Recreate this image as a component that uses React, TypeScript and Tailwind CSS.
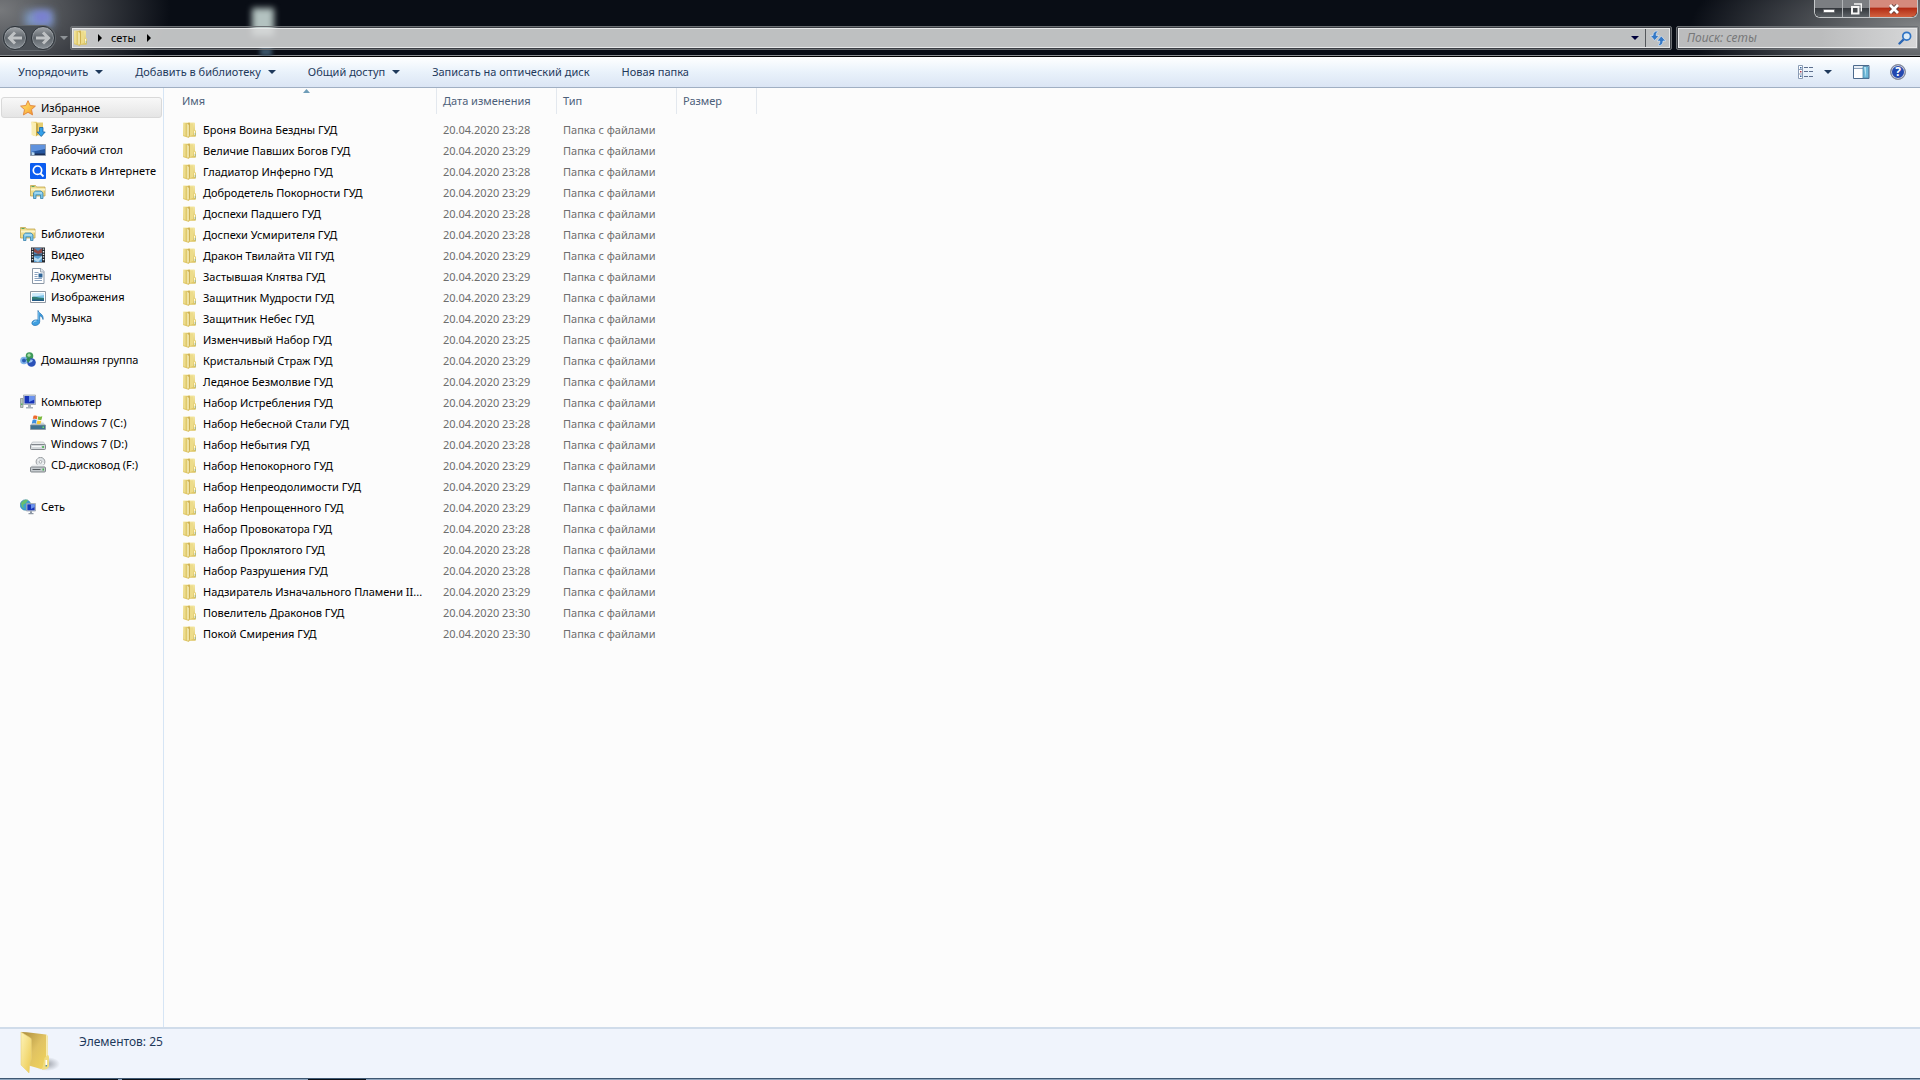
import React from 'react';

const files = [
  ['Броня Воина Бездны ГУД', '23:28'],
  ['Величие Павших Богов ГУД', '23:29'],
  ['Гладиатор Инферно ГУД', '23:28'],
  ['Добродетель Покорности ГУД', '23:29'],
  ['Доспехи Падшего ГУД', '23:28'],
  ['Доспехи Усмирителя ГУД', '23:28'],
  ['Дракон Твилайта VII ГУД', '23:29'],
  ['Застывшая Клятва ГУД', '23:29'],
  ['Защитник Мудрости ГУД', '23:29'],
  ['Защитник Небес ГУД', '23:29'],
  ['Изменчивый Набор ГУД', '23:25'],
  ['Кристальный Страж ГУД', '23:29'],
  ['Ледяное Безмолвие ГУД', '23:29'],
  ['Набор Истребления ГУД', '23:29'],
  ['Набор Небесной Стали ГУД', '23:28'],
  ['Набор Небытия ГУД', '23:28'],
  ['Набор Непокорного ГУД', '23:29'],
  ['Набор Непреодолимости ГУД', '23:29'],
  ['Набор Непрощенного ГУД', '23:29'],
  ['Набор Провокатора ГУД', '23:28'],
  ['Набор Проклятого ГУД', '23:28'],
  ['Набор Разрушения ГУД', '23:28'],
  ['Надзиратель Изначального Пламени II...', '23:29'],
  ['Повелитель Драконов ГУД', '23:30'],
  ['Покой Смирения ГУД', '23:30'],
];

function Icon({ children }: { children: React.ReactNode }) {
  return (
    <svg width="16" height="16" viewBox="0 0 16 16" className="shrink-0" aria-hidden="true">
      {children}
    </svg>
  );
}

function FolderIcon() {
  return (
    <Icon>
      <defs>
        <linearGradient id="folder-back" x1="0" y1="0" x2="0" y2="1">
          <stop offset="0" stopColor="#f3e7a4" />
          <stop offset="1" stopColor="#dcc25c" />
        </linearGradient>
        <linearGradient id="folder-flap" x1="0" y1="0" x2="1" y2="0">
          <stop offset="0" stopColor="#f3e6a0" />
          <stop offset="1" stopColor="#dcc463" />
        </linearGradient>
      </defs>
      <path d="M1.500.5h10.500q1 0 1 1v6.500l1 .8v5q0 1-1 1H8l-1.500 1-5-1.500q-.5-.3-.5-1V1q0-.5.5-.5z" fill="url(#folder-back)" />
      <path d="M1.500 1h3.500v13L1.500 13.200z" fill="url(#folder-flap)" />
      <path d="M5 1.500l2-1q1 0 1 1V13l-1.500 2.500L5 14.500z" fill="#cfb254" />
      <path d="M5.200 1.800q1.600.4 1.600 1.700V14l-.8 1-.8-.8z" fill="#f7efb8" />
      <path d="M8 1.500h3V13L8 14z" fill="#eddc8a" />
      <path d="M12.500 9v4" stroke="#fffbe2" strokeWidth=".9" />
      <path d="M13.200 11v2.500" stroke="#8fb0a0" strokeWidth=".8" />
    </Icon>
  );
}

function LibraryIcon() {
  return (
    <Icon>
      <path d="M.5 3.500V1.500h5l1 1.500h8.500v9H.5z" fill="#efdc8a" stroke="#c3a64e" strokeWidth=".8" />
      <path d="M1.500 2h3v1h-3z" fill="#58a866" />
      <path d="M1 4.500h14v2H1z" fill="#fdf5c8" />
      <path d="M3.500 14.500V8.800L5.500 7h5.500l2 1.800v5.700h-2.500v-3.500H6v3.500z" fill="#79c3e6" stroke="#3a83ad" strokeWidth=".8" />
      <path d="M4.500 9h7.500" stroke="#c5ecfa" />
    </Icon>
  );
}

function StarIcon() {
  return (
    <Icon>
      <defs>
        <linearGradient id="star" x1="0" y1="0" x2="1" y2="1">
          <stop offset="0" stopColor="#ffe566" />
          <stop offset=".55" stopColor="#fbc04c" />
          <stop offset="1" stopColor="#f08a28" />
        </linearGradient>
      </defs>
      <path
        d="M8 .7l2.200 4.800 5.200.6-3.900 3.500 1.100 5.300L8 12.300l-4.600 2.600 1.100-5.300L.6 6.100l5.200-.6z"
        fill="url(#star)"
        stroke="#e0823a"
        strokeWidth=".9"
        strokeLinejoin="round"
      />
    </Icon>
  );
}

function DownloadsIcon() {
  return (
    <Icon>
      <path d="M1.500.8h5l1 .8h5.500v12.900H3z" fill="#e6cd70" />
      <path d="M1.500.8L6 2v13.500L1.500 14z" fill="#faeeb2" />
      <path d="M6 2l2 .8v10.500l-2 2.200z" fill="#c8a843" />
      <path d="M9.500 6.500h3.500v4.500h2.200l-4 4.500-4-4.500h2.300z" fill="#35a0e8" stroke="#1766a8" strokeWidth=".8" />
    </Icon>
  );
}

function DesktopIcon() {
  return (
    <Icon>
      <path d="M.5 2.500h15v11H.5z" fill="#25569f" stroke="#8f9cae" />
      <path d="M1 3h14v4L1 10z" fill="#5f92dd" />
      <path d="M1 11.500h14V13H1z" fill="#1b2f57" />
      <path d="M1.500 10l3 .5v2.500h-3z" fill="#b8d9f4" />
    </Icon>
  );
}

function WebSearchIcon() {
  return (
    <Icon>
      <rect width="16" height="16" rx="1" fill="#0a5cf0" />
      <circle cx="7.500" cy="7.200" r="4.200" fill="none" stroke="#fff" strokeWidth="1.700" />
      <path d="M10.500 10.500l3 3" stroke="#fff" strokeWidth="1.800" />
    </Icon>
  );
}

function VideoIcon() {
  return (
    <Icon>
      <path d="M1 .5h14v15H1z" fill="#22272e" />
      <path d="M4 1h8v6.500H4z" fill="#4d86b8" />
      <path d="M4 8.500h8V15H4z" fill="#5ba0d4" />
      <path d="M4 1l4 3 4-3v5L8 7 4 5z" fill="#8f4a48" />
      <path d="M4 10l4 2 4-3v2l-4 4-4-2z" fill="#b5d9ef" />
      <path d="M2.500 1.500v13M13.500 1.500v13" stroke="#e8edf0" strokeWidth="1.400" strokeDasharray="1.300 1.300" />
    </Icon>
  );
}

function DocumentIcon() {
  return (
    <Icon>
      <path d="M2.500.5h8.500l3 3v12H2.500z" fill="#fff" stroke="#8c98a6" />
      <path d="M10.500.5v3.500H14" fill="#dfe7ee" stroke="#8c98a6" strokeWidth=".8" />
      <path d="M4.500 4.500h4M4.500 6.500h3M4.500 8.500h3M4.500 10.500h7.500M4.500 12.500h7.500" stroke="#8ba3bf" />
      <path d="M8.500 5.500h4v4h-4z" fill="#2f6496" />
    </Icon>
  );
}

function PicturesIcon() {
  return (
    <Icon>
      <path d="M.5 2.500h15v11H.5z" fill="#fff" stroke="#8f98a3" />
      <path d="M2 4h12v8H2z" fill="#7fc4e8" />
      <path d="M2 4h12v2L2 8z" fill="#cdeafb" />
      <path d="M2 8c4-1 7 1 12 1v3H2z" fill="#2f7d75" />
      <path d="M2 10.500h12V12H2z" fill="#235a86" />
    </Icon>
  );
}

function MusicIcon() {
  return (
    <Icon>
      <path d="M8 .5c.6 3 6 3.500 5 9-.3-2.200-1.500-3.300-3.300-3.700v6C9.700 14 7.500 15.500 5 15.500S1.500 14 2 12.300 4.700 9.500 8 10z" fill="#3f9fe0" stroke="#1e6fb0" strokeWidth=".7" />
      <path d="M3.500 12.500c.5-1 1.500-1.500 3-1.500" stroke="#b7e1fa" fill="none" />
      <path d="M8.700 2v8" stroke="#8fd0f6" strokeWidth=".7" />
    </Icon>
  );
}

function HomegroupIcon() {
  return (
    <Icon>
      <circle cx="9.500" cy="4" r="3.800" fill="#3f9a5a" />
      <circle cx="4" cy="8.500" r="3.800" fill="#7fb2ea" />
      <circle cx="11.500" cy="10.500" r="4.300" fill="#2b52b8" />
      <circle cx="4" cy="8.500" r="2" fill="#2a5cb4" />
      <circle cx="9" cy="3.200" r="1.600" fill="#a7dba4" />
      <path d="M8.500 9c1-1.500 3-2 4.500-1l-1 2-3 1z" fill="#9cc2f4" />
      <path d="M6 7l3-1.500L10.500 8 8 11z" fill="#2f8a55" />
    </Icon>
  );
}

function ComputerIcon() {
  return (
    <Icon>
      <path d="M.5 4.500h2.500v9H.5z" fill="#b8c6c0" stroke="#808a88" strokeWidth=".7" />
      <path d="M1.200 9.500h1.200v1.500H1.200z" fill="#3fae4a" />
      <path d="M3.500 1h12v9.500h-12z" fill="#d5dbe2" stroke="#8e98a5" strokeWidth=".7" />
      <path d="M4.500 2h10v7.500h-10z" fill="#1734b8" />
      <path d="M9 2h5.500v3.500L9 8z" fill="#6c94ee" />
      <path d="M8 11h3v2h2v1.500H6V13h2z" fill="#a9b1bb" />
    </Icon>
  );
}

function SystemDriveIcon() {
  return (
    <Icon>
      <path d="M2.500 7.500h11l2 3H.5z" fill="#c9d3da" />
      <path d="M.5 10h15v4.500H.5z" fill="#3f7290" stroke="#8a979f" strokeWidth=".8" />
      <path d="M12.500 11.500h1.500v1.500h-1.500z" fill="#6de06a" />
      <path d="M3.500.8C5 .2 6.500.3 7.500 1L6.800 4.300c-1-.7-2.500-.7-4-.2z" fill="#ee6a2c" />
      <path d="M8.300 1.300c1.200.6 2.500.6 4 0l-.8 3.400c-1.400.5-2.800.4-3.900-.1z" fill="#7cb93c" />
      <path d="M2.600 5c1.500-.6 3-.5 4 .1L6 8.500c-1.200-.7-2.600-.7-4.200 0z" fill="#3d8fe0" />
      <path d="M7.400 5.500c1.200.6 2.600.6 4 0l-.8 3.300c-1.400.6-2.800.5-4-.1z" fill="#f8c832" />
    </Icon>
  );
}

function DriveIcon() {
  return (
    <Icon>
      <path d="M2.500 6h11l2 3H.5z" fill="#e9ecee" stroke="#a9afb4" strokeWidth=".6" />
      <rect x=".5" y="8.500" width="15" height="5" rx="1" fill="#d3d8db" stroke="#777d82" strokeWidth=".9" />
      <path d="M2 10h9v1H2z" fill="#f6f8f9" />
      <path d="M12.300 10h1.500v2h-1.500z" fill="#3faf4a" />
    </Icon>
  );
}

function DiscDriveIcon() {
  return (
    <Icon>
      <circle cx="10.500" cy="4.800" r="4.400" fill="#dfe3e6" stroke="#8d9296" strokeWidth=".9" />
      <path d="M10.500 4.800L7.500 2M10.500 4.800L14 7" stroke="#fff" />
      <circle cx="10.500" cy="4.800" r="1.300" fill="#fff" stroke="#8d9296" strokeWidth=".7" />
      <path d="M2.500 7.500h11l2 3H.5z" fill="#e9ecee" />
      <rect x=".5" y="10" width="15" height="5" rx="1" fill="#c6cbcf" stroke="#777d82" strokeWidth=".9" />
      <path d="M2.500 12.500h8" stroke="#555b60" />
      <path d="M12.500 11.500H14v2h-1.500z" fill="#3faf4a" />
    </Icon>
  );
}

function NetworkIcon() {
  return (
    <Icon>
      <circle cx="5.500" cy="6" r="5.300" fill="#3f9fd0" stroke="#2f7b96" strokeWidth=".5" />
      <path d="M1 4c2-3 5-4 7-3L6 4 3 6l1 3-2-1z" fill="#69c06a" />
      <path d="M6.500 4.500h9v7.500h-9z" fill="#d5dbe2" stroke="#8e98a5" strokeWidth=".7" />
      <path d="M7.300 5.300h7.400v6H7.300z" fill="#1734b8" />
      <path d="M11 5.300h3.700V8L11 10z" fill="#6c94ee" />
      <path d="M10 12.300h2v1.700h1.500v1.200h-5V14H10z" fill="#8e98a5" />
    </Icon>
  );
}

const groups = [
  {
    title: 'Избранное',
    icon: <StarIcon />,
    selected: true,
    items: [
      { label: 'Загрузки', icon: <DownloadsIcon /> },
      { label: 'Рабочий стол', icon: <DesktopIcon /> },
      { label: 'Искать в Интернете', icon: <WebSearchIcon /> },
      { label: 'Библиотеки', icon: <LibraryIcon /> },
    ],
  },
  {
    title: 'Библиотеки',
    icon: <LibraryIcon />,
    items: [
      { label: 'Видео', icon: <VideoIcon /> },
      { label: 'Документы', icon: <DocumentIcon /> },
      { label: 'Изображения', icon: <PicturesIcon /> },
      { label: 'Музыка', icon: <MusicIcon /> },
    ],
  },
  { title: 'Домашняя группа', icon: <HomegroupIcon />, items: [] },
  {
    title: 'Компьютер',
    icon: <ComputerIcon />,
    items: [
      { label: 'Windows 7 (C:)', icon: <SystemDriveIcon /> },
      { label: 'Windows 7 (D:)', icon: <DriveIcon /> },
      { label: 'CD-дисковод (F:)', icon: <DiscDriveIcon /> },
    ],
  },
  { title: 'Сеть', icon: <NetworkIcon />, items: [] },
];

function DownArrow() {
  return (
    <svg width="8" height="4" viewBox="0 0 8 4" fill="currentColor" aria-hidden="true">
      <path d="M0 0h8L4 4z" />
    </svg>
  );
}

function RightArrow() {
  return (
    <svg width="4" height="8" viewBox="0 0 4 8" fill="#000" aria-hidden="true">
      <path d="M0 0l4 4-4 4z" />
    </svg>
  );
}

function NavArrow({ label, flip }: { label: string; flip?: boolean }) {
  return (
    <button
      aria-label={label}
      className="flex size-6 items-center justify-center rounded-full border border-[#2c3238] bg-linear-to-b from-[#a2a6aa] via-[#5f656b] to-[#8b9298] ring-1 ring-[#a4a9ad]/60 ring-inset"
    >
      <svg width="16" height="16" viewBox="0 0 16 16" className={flip ? 'rotate-180' : ''}>
        <path d="M8 2.500L2.500 8 8 13.500M2.500 8H15" fill="none" stroke="#bfc2c4" strokeWidth="3" />
      </svg>
    </button>
  );
}

function TitleBar() {
  return (
    <header className="relative flex h-[57px] flex-col overflow-hidden border-b border-black bg-[#090d15] bg-[radial-gradient(ellipse_170px_110px_at_0px_10px,#77797c,transparent),radial-gradient(ellipse_230px_90px_at_100%_30px,#85888a,transparent)]">
      {/* blurred desktop shortcuts behind the glass */}
      <div className="absolute top-[11px] left-[25px] h-4 w-7 bg-[#7f9ac4] blur-[4px]" />
      <div className="absolute top-[11px] left-[34px] h-3 w-4 bg-[#7a80d0] blur-[3px]" />
      <div className="absolute top-2 left-[252px] h-7 w-[22px] bg-[#b3c2c0] blur-[3px]" />
      <div className="absolute top-[48px] left-[260px] h-2 w-3 bg-[#3c566b] blur-[2px]" />

      <div className="relative flex h-[26px] items-start justify-end pr-[2px]">
        <div className="flex h-[18px] rounded-b-md border border-t-0 border-[#c5c8ca] bg-[#1a1d20]">
          <button aria-label="Свернуть" className="flex w-[28px] items-center justify-center rounded-bl-md border-r border-[#b0b3b6] bg-linear-to-b from-[#7b7e82] from-45% via-[#34383d] via-50% to-[#5e6368]">
            <svg width="12" height="12" viewBox="0 0 12 12">
              <path d="M.5 6.500h11v3H.5z" fill="#fff" stroke="#55585c" strokeWidth=".6" />
            </svg>
          </button>
          <button aria-label="Свернуть в окно" className="flex w-[27px] items-center justify-center border-r border-[#b0b3b6] bg-linear-to-b from-[#7b7e82] from-45% via-[#34383d] via-50% to-[#5e6368]">
            <svg width="12" height="12" viewBox="0 0 12 12" fill="none" stroke="#f4f4f4">
              <path d="M4 1h7.300v7.500" strokeWidth="1.400" />
              <path d="M2 4h6.500v6.500H2z" strokeWidth="2" fill="#44484c" />
            </svg>
          </button>
          <button aria-label="Закрыть" className="flex w-[47px] items-center justify-center rounded-br-md bg-linear-to-b from-[#d58a7c] from-40% via-[#b32c14] via-50% to-[#d2613f]">
            <svg width="12" height="12" viewBox="0 0 12 12">
              <path d="M2.500 2.500l7 7M9.500 2.500l-7 7" stroke="#5b3a36" strokeWidth="4.400" />
              <path d="M2 2l8 8M10 2l-8 8" stroke="#fff" strokeWidth="2.800" />
            </svg>
          </button>
        </div>
      </div>

      <div className="relative flex h-6 items-center pr-px pl-[3px]">
        <div className="flex gap-1 rounded-full bg-[#4a4f55] ring-1 ring-[#63686d]">
          <NavArrow label="Назад" />
          <NavArrow label="Вперед" flip />
        </div>
        <button aria-label="Последние страницы" className="ml-[5px] w-[10px] text-[#8d9296]">
          <DownArrow />
        </button>
        <div className="flex h-6 min-w-0 flex-1 rounded-xs border border-[#6b6f73] bg-white/20 p-px">
          <div className="flex flex-1 items-center border border-[#e6e7e8] bg-[#d6d7d7]/85">
            <div className="flex flex-1 items-center">
              <FolderIcon />
              <span className="ml-[9px]"><RightArrow /></span>
              <span className="ml-[9px] text-black">сеты</span>
              <span className="ml-[11px]"><RightArrow /></span>
            </div>
            <button aria-label="Предыдущие расположения" className="flex w-5 items-center justify-center text-[#00003c]">
              <DownArrow />
            </button>
            <button aria-label="Обновить" className="flex h-full w-6 items-center justify-center border-l border-[#55585c]">
              <svg width="16" height="16" viewBox="0 0 16 16" fill="#3478c6" stroke="#e8f1fb" strokeWidth=".6">
                <path d="M7.500 1C4.500 1 3 2.500 3 5.500H.3L4.700 10.500 9 5.500H6.200C6.200 3.500 6.500 2.500 8 1.500z" />
                <path d="M8.500 15.500c3 0 4.500-1.500 4.500-4.500h2.700L11.300 6 7 11h2.800c0 2-.3 3-1.800 4z" />
              </svg>
            </button>
          </div>
        </div>
        <div className="ml-1 flex h-6 w-[243px] rounded-xs border border-[#6b6f73] bg-white/20 p-px">
          <div className="flex flex-1 items-center border border-[#e6e7e8] bg-linear-to-r from-[#bbbcbd] from-60% to-[#d6d7d8] pr-1 pl-2">
            <input
              aria-label="Поиск"
              placeholder="Поиск: сеты"
              className="min-w-0 flex-1 bg-transparent text-xs italic outline-none placeholder:text-[#777879]"
            />
            <svg width="14" height="14" viewBox="0 0 14 14" fill="none">
              <path d="M6 8l-4.500 4.500" stroke="#2a66b4" strokeWidth="2.400" strokeLinecap="round" />
              <circle cx="8.700" cy="5.200" r="3.900" stroke="#2f74c4" strokeWidth="1.700" fill="#dcebf6" />
            </svg>
          </div>
        </div>
      </div>
      <div className="mt-[5px] h-px bg-[#8a8d90]" />
    </header>
  );
}

function ToolButton({ children, menu }: { children: React.ReactNode; menu?: boolean }) {
  return (
    <button className="flex items-center gap-[7px] px-4 whitespace-nowrap">
      {children}
      {menu && <DownArrow />}
    </button>
  );
}

function Toolbar() {
  return (
    <div className="flex h-[31px] items-stretch border-b border-[#a0afc3] bg-linear-to-b from-white via-[#e9f2fb] via-50% to-[#dbe5f4] pr-[14px] pl-[2px] text-[#1e395b]">
      <ToolButton menu>Упорядочить</ToolButton>
      <ToolButton menu>Добавить в библиотеку</ToolButton>
      <ToolButton menu>Общий доступ</ToolButton>
      <ToolButton>Записать на оптический диск</ToolButton>
      <ToolButton>Новая папка</ToolButton>
      <div className="ml-auto flex items-center">
        <button aria-label="Изменить представление">
          <svg width="16" height="14" viewBox="0 0 16 14" fill="none">
            <path d="M.5.5h4v13h-4z" fill="#fff" stroke="#8b9cb4" />
            <path d="M1 4.500h3M1 9h3" stroke="#8b9cb4" />
            <path d="M2 2h1.500v1.500H2z" fill="#35659e" />
            <path d="M2 6h1.500v1.500H2z" fill="#a83c50" />
            <path d="M2 10.500h1.500V12H2z" fill="#35659e" />
            <path d="M6 2.500h4M11 2.500h4M6 6.500h4M11 6.500h4M6 11.500h4M11 11.500h4" stroke="#5c6f8e" />
          </svg>
        </button>
        <button aria-label="Дополнительные параметры" className="ml-[10px]">
          <DownArrow />
        </button>
        <button aria-label="Область просмотра" className="ml-[21px]">
          <svg width="17" height="14" viewBox="0 0 17 14">
            <path d="M.5.5h15.500v13H.5z" fill="#fff" stroke="#4c6a8c" />
            <path d="M1 1h15v2H1z" fill="#e8eef5" />
            <path d="M1 3.500h9" stroke="#8ca0b8" />
            <path d="M10 1.500h5.500v11.500H10z" fill="#6fb9d8" stroke="#4c86a8" strokeWidth=".8" />
            <path d="M11 2h2v11z" fill="#b6e2f2" />
          </svg>
        </button>
        <button aria-label="Справка" className="ml-5 flex size-4 items-center justify-center rounded-full border border-[#8d8f98] bg-[#2348b0] text-xs leading-none font-bold text-white ring-1 ring-[#c9ccd4] ring-inset">
          ?
        </button>
      </div>
    </div>
  );
}

function Sidebar() {
  return (
    <nav className="flex w-[164px] shrink-0 flex-col gap-[21px] border-r border-[#d6e5f5] pt-[9px] pl-px text-black">
      {groups.map((group) => (
        <div key={group.title}>
          <a
            href="#"
            className={
              group.selected
                ? 'mr-px flex h-[21px] items-center gap-[5px] rounded-[3px] border border-[#d9d9d9] bg-linear-to-b from-[#f8f8f8] to-[#e5e5e5] pl-[18px]'
                : 'flex h-[21px] items-center gap-[5px] pl-[19px]'
            }
          >
            {group.icon}
            {group.title}
          </a>
          {group.items.map((item) => (
            <a key={item.label} href="#" className="flex h-[21px] items-center gap-[5px] pl-[29px] whitespace-nowrap">
              {item.icon}
              {item.label}
            </a>
          ))}
        </div>
      ))}
    </nav>
  );
}

function ColumnHead({ children }: { children: React.ReactNode }) {
  return (
    <th className="p-0 text-left align-top font-normal">
      <div className="flex h-[26px] items-center border-r border-[#e3e8ee] pl-[6px]">{children}</div>
    </th>
  );
}

function FileTable() {
  return (
    <table className="w-[593px] table-fixed border-collapse self-start text-[#6d6d6d]">
      <colgroup>
        <col className="w-[273px]" />
        <col className="w-[120px]" />
        <col className="w-[120px]" />
        <col className="w-[80px]" />
      </colgroup>
      <thead className="text-[#4c607a]">
        <tr className="h-[31px]">
          <th className="p-0 text-left align-top font-normal" aria-sort="ascending">
            <div className="relative flex h-[26px] items-center border-r border-[#e3e8ee] pl-[18px]">
              Имя
              <svg width="7" height="4" viewBox="0 0 7 4" className="absolute top-px left-[139px]">
                <path d="M0 4l3.500-4L7 4z" fill="#6f9db8" />
              </svg>
            </div>
          </th>
          <ColumnHead>Дата изменения</ColumnHead>
          <ColumnHead>Тип</ColumnHead>
          <ColumnHead>Размер</ColumnHead>
        </tr>
      </thead>
      <tbody>
        {files.map(([name, time]) => (
          <tr key={name} className="h-[21px]">
            <td className="p-0">
              <div className="flex items-center gap-[5px] pl-[18px] whitespace-nowrap text-black">
                <FolderIcon />
                {name}
              </div>
            </td>
            <td className="p-0 pl-[6px] whitespace-nowrap">20.04.2020 {time}</td>
            <td className="p-0 pl-[6px] whitespace-nowrap">Папка с файлами</td>
            <td className="p-0" />
          </tr>
        ))}
      </tbody>
    </table>
  );
}

function StatusBar() {
  return (
    <footer className="flex h-[51px] shrink-0 items-start border-t-2 border-[#d0dcea] bg-[#f0f4fc] pl-[19px] text-xs leading-4 text-[#1e395b]">
      <svg width="42" height="46" viewBox="0 0 42 46" className="mt-px shrink-0" aria-hidden="true">
        <defs>
          <linearGradient id="flap" x1="0" y1="0" x2="1" y2="1">
            <stop offset="0" stopColor="#fdf3b8" />
            <stop offset="1" stopColor="#ecc94e" />
          </linearGradient>
          <linearGradient id="inner" x1="0" y1="0" x2="1" y2="1">
            <stop offset="0" stopColor="#a98a3c" />
            <stop offset=".5" stopColor="#e0c262" />
            <stop offset="1" stopColor="#f2d65c" />
          </linearGradient>
          <radialGradient id="shade">
            <stop offset="0" stopColor="#8b8f98" stopOpacity=".8" />
            <stop offset="1" stopColor="#8b8f98" stopOpacity="0" />
          </radialGradient>
        </defs>
        <ellipse cx="28" cy="34" rx="13" ry="7" fill="url(#shade)" />
        <path d="M2 2l6 .3L27 4.500q1.500.3 1.500 2V37l-6.500 2-14-4z" fill="url(#inner)" />
        <path d="M27 4.500q1.500.3 1.500 2V28h-1.500z" fill="#f8ecae" />
        <path d="M25.500 28l3-3q1.500 0 1.500 2v9.500l-2 2.500-5 1z" fill="#f0dc80" />
        <path d="M27.300 30v5.500" stroke="#fff" strokeWidth="1.600" />
        <path d="M27.300 35v1.500" stroke="#5b8f98" strokeWidth="1.500" />
        <path d="M2 2l9.500 6q.8.500.8 2v18q0 2-1.300 4l-1 11L2 35z" fill="url(#flap)" stroke="#e8d27c" strokeWidth=".6" />
      </svg>
      <span className="mt-[5px] ml-[18px]">Элементов: 25</span>
    </footer>
  );
}

export default function App() {
  return (
    <div className="flex min-h-screen flex-col bg-[#fcfcfc] font-['Noto_Sans','Open_Sans',sans-serif] text-[11px] leading-4">
      <TitleBar />
      <Toolbar />
      <main className="flex flex-1">
        <Sidebar />
        <FileTable />
      </main>
      <StatusBar />
      {/* top edge of the taskbar */}
      <div className="flex h-[2px] shrink-0 gap-1 border-t border-[#3f5873] bg-[#8fa5bd] pl-[60px]">
        <div className="w-[58px] bg-[#0b0f16]" />
        <div className="w-[58px] bg-[#0b0f16]" />
        <div className="ml-[124px] w-[58px] bg-[#0b0f16]" />
      </div>
    </div>
  );
}
